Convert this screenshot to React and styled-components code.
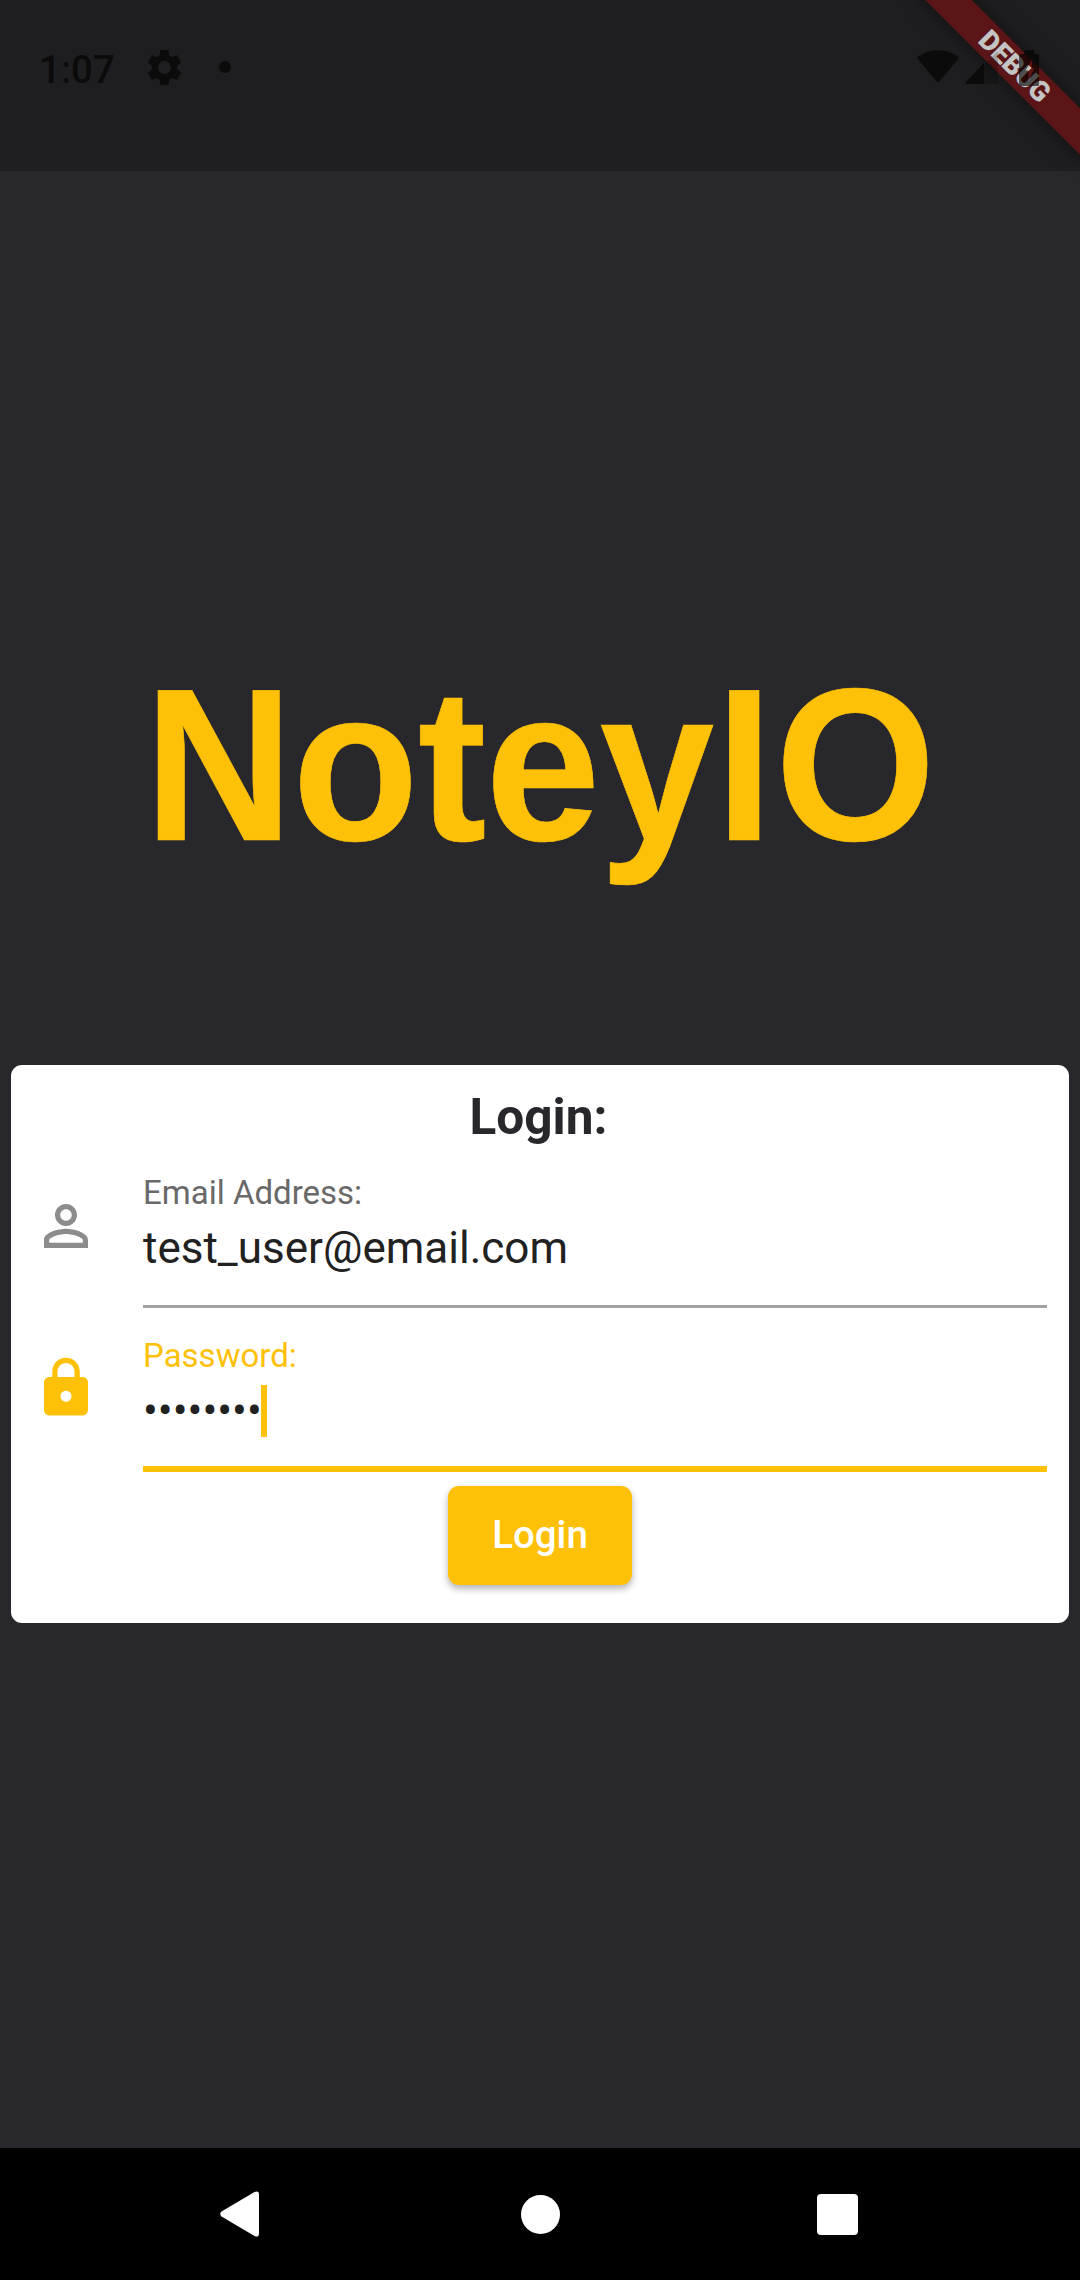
import React from "react";
import styled, { createGlobalStyle } from "styled-components";

const AMBER = "#ffc107";
const INK = "#28272c";

const GlobalStyle = createGlobalStyle`
  body {
    margin: 0;
    background: ${INK};
  }
  *, *::before, *::after {
    box-sizing: border-box;
  }
`;

const Screen = styled.div`
  position: relative;
  display: flex;
  flex-direction: column;
  width: 1080px;
  height: 2280px;
  overflow: hidden;
  background: ${INK};
  font-family: Roboto, "Liberation Sans", sans-serif;
`;

const AppBar = styled.header`
  flex: none;
  height: 171px;
  background: #1e1e20;
`;

const StatusRow = styled.div`
  position: relative;
  z-index: 2;
  display: flex;
  align-items: center;
  height: 135px;
  padding: 0 41px 0 39px;
  color: #000;
  opacity: 0.6;
`;

const Clock = styled.span`
  width: 109px;
  padding-top: 4px;
  font-size: 38.5px;
  font-weight: 500;
  line-height: 46px;
`;

const StatusGlyph = styled.svg`
  flex: none;
  display: block;
  width: ${(p) => p.$w}px;
  height: ${(p) => p.$h}px;
  margin-left: ${(p) => p.$gap || 0}px;
  margin-bottom: ${(p) => p.$lift || 0}px;
  fill: currentColor;
`;

const Spacer = styled.span`
  flex: 1;
`;

const DebugBanner = styled.div`
  position: absolute;
  z-index: 1;
  top: 49.3px;
  left: 894px;
  width: 240px;
  height: 33px;
  padding-left: 2px;
  transform: rotate(45deg);
  background: #5c1516;
  box-shadow: 0 0 17px rgba(0, 0, 0, 0.5);
  color: #c4c4c4;
  font-size: 28px;
  font-weight: 900;
  letter-spacing: -0.3px;
  line-height: 33px;
  text-align: center;
`;

const Body = styled.main`
  flex: 1;
  display: flex;
  flex-direction: column;
  align-items: stretch;
`;

const Brand = styled.h1`
  height: 894px;
  margin: 0;
  padding-top: 475px;
  color: ${AMBER};
  font-family: "Liberation Sans", sans-serif;
  font-size: 206.25px;
  font-weight: 700;
  line-height: 238px;
  text-align: center;
`;

const BrandText = styled.span`
  display: inline-block;
  transform: scaleY(1.052);
  -webkit-text-stroke: 0.6px ${AMBER};
`;

const BrandPart = styled.span`
  letter-spacing: ${(p) => p.$track}px;
`;

const Card = styled.section`
  display: flex;
  flex-direction: column;
  align-items: stretch;
  height: 558px;
  margin: 0 11px;
  padding: 23px 22px 0;
  border-radius: 11px;
  background: #fff;
`;

const CardTitle = styled.h2`
  height: 57px;
  margin: 0;
  padding-right: 3px;
  color: ${INK};
  font-size: 49.5px;
  font-weight: 700;
  line-height: 58px;
  text-align: center;
`;

const FieldRow = styled.label`
  display: flex;
  gap: 44px;
  height: 163.3px;
`;

const FieldIcon = styled.svg`
  flex: none;
  width: 66px;
  height: 66px;
  margin-top: ${(p) => p.$top}px;
  fill: ${(p) => p.$color};
`;

const FieldBody = styled.span`
  flex: 1;
  display: flex;
  flex-direction: column;
  padding-top: 28px;
  border-bottom: ${(p) => (p.$active ? `6px solid ${AMBER}` : "3px solid #a3a3a3")};
`;

const FieldLabel = styled.span`
  margin-bottom: 9.5px;
  color: ${(p) => (p.$active ? AMBER : "#696969")};
  font-size: 33px;
  line-height: 39px;
`;

const FieldValue = styled.span`
  display: flex;
  align-items: center;
  height: 52px;
  color: #212121;
  font-size: 44px;
  line-height: 52px;
`;

const Caret = styled.span`
  width: 6px;
  height: 52px;
  margin-left: -0.3px;
  background: ${AMBER};
`;

const SubmitButton = styled.button`
  align-self: center;
  width: 184px;
  height: 99px;
  margin-top: 14px;
  padding: 0;
  border: 0;
  border-radius: 11px;
  background: ${AMBER};
  box-shadow: 0 4px 6px rgba(0, 0, 0, 0.2), 0 3px 10px rgba(0, 0, 0, 0.12);
  color: #fff;
  font-family: inherit;
  font-size: 38.5px;
  font-weight: 500;
  line-height: 46px;
`;

const NavBar = styled.nav`
  flex: none;
  display: flex;
  align-items: center;
  gap: 262px;
  height: 132px;
  padding: 0 0 0 220px;
  background: #000;
`;

const NavGlyph = styled.svg`
  display: block;
  width: ${(p) => p.$w}px;
  height: ${(p) => p.$h}px;
  margin-left: ${(p) => p.$nudge || 0}px;
  fill: #fff;
`;

const PERSON =
  "M12 5.9c1.16 0 2.1.94 2.1 2.1s-.94 2.1-2.1 2.1S9.9 9.16 9.9 8s.94-2.1 2.1-2.1m0 9c2.97 0 6.1 1.46 6.1 2.1v1.1H5.9V17c0-.64 3.13-2.1 6.1-2.1M12 4C9.79 4 8 5.79 8 8s1.79 4 4 4 4-1.79 4-4-1.79-4-4-4zm0 9c-2.67 0-8 1.34-8 4v3h16v-3c0-2.66-5.33-4-8-4z";
const LOCK =
  "M18 8h-1V6c0-2.76-2.24-5-5-5S7 3.24 7 6v2H6c-1.1 0-2 .9-2 2v10c0 1.1.9 2 2 2h12c1.1 0 2-.9 2-2V10c0-1.1-.9-2-2-2zm-6 9c-1.1 0-2-.9-2-2s.9-2 2-2 2 .9 2 2-.9 2-2 2zm3.1-9H8.900V6c0-1.710 1.390-3.100 3.100-3.100 1.710 0 3.100 1.390 3.100 3.100v2z";
const GEAR =
  "M19.140 12.940c.040-.300.060-.610.060-.940 0-.320-.020-.640-.070-.940l2.030-1.580c.180-.140.230-.410.120-.610l-1.920-3.320c-.120-.220-.370-.290-.590-.220l-2.390.960c-.500-.380-1.030-.700-1.620-.940l-.360-2.540c-.040-.240-.240-.410-.480-.410h-3.840c-.240 0-.430.170-.470.410l-.360 2.540c-.590.240-1.130.570-1.620.940l-2.390-.960c-.220-.080-.470 0-.590.220L2.740 8.870c-.120.210-.080.470.120.610l2.030 1.580c-.050.300-.090.630-.090.940s.020.640.070.940l-2.030 1.580c-.180.140-.230.410-.120.610l1.920 3.320c.120.220.370.290.590.220l2.390-.960c.500.380 1.030.700 1.620.940l.360 2.540c.050.240.240.410.480.410h3.840c.240 0 .440-.170.470-.410l.360-2.540c.590-.240 1.130-.560 1.620-.940l2.390.960c.220.080.470 0 .590-.220l1.920-3.320c.120-.220.070-.470-.120-.610l-2.010-1.580zM12 15.600c-1.980 0-3.600-1.620-3.600-3.600s1.620-3.600 3.600-3.600 3.600 1.620 3.600 3.600-1.620 3.600-3.600 3.600z";

function StatusBar() {
  return (
    <StatusRow>
      <Clock>1:07</Clock>
      <StatusGlyph $w={33} $h={35} viewBox="2.670 2.400 18.660 19.200" preserveAspectRatio="none">
        <path d={GEAR} />
      </StatusGlyph>
      <StatusGlyph $w={12} $h={12} $gap={38} $lift={1} viewBox="0 0 12 12">
        <circle cx="6" cy="6" r="6" />
      </StatusGlyph>
      <Spacer />
      <StatusGlyph $w={42} $h={33} $lift={2} viewBox="0 0 42 33">
        <path d="M1.200 9.500Q-.600 7.500 1.600 5.900Q10 .300 21 .300T40.400 5.900Q42.600 7.500 40.800 9.500L22.800 31Q21 33 19.200 31Z" />
      </StatusGlyph>
      <StatusGlyph $w={33} $h={33} $gap={6} viewBox="0 0 33 33">
        <path opacity="0.300" d="M19 14V33H33V2Q33 0 31.500 1.500Z" />
        <path d="M19 12V33H1.500Q-.500 33 .800 31.200Z" />
      </StatusGlyph>
      <StatusGlyph $w={20} $h={36} $gap={21} viewBox="0 0 20 36">
        <path
          fillRule="evenodd"
          d="M5 0H15V4H18.500Q20 4 20 5.500V34.500Q20 36 18.500 36H1.500Q0 36 0 34.500V5.500Q0 4 1.500 4H5ZM13 9.500L6.500 20.500H9.500V31L15.500 18H13Z"
        />
      </StatusGlyph>
    </StatusRow>
  );
}

function Field({ icon, iconTop, label, active, children }) {
  return (
    <FieldRow>
      <FieldIcon viewBox="0 0 24 24" $top={iconTop} $color={active ? AMBER : "#8c8c8c"}>
        <path d={icon} />
      </FieldIcon>
      <FieldBody $active={active}>
        <FieldLabel $active={active}>{label}</FieldLabel>
        <FieldValue>{children}</FieldValue>
      </FieldBody>
    </FieldRow>
  );
}

export default function App() {
  return (
    <>
      <GlobalStyle />
      <Screen>
        <AppBar>
          <StatusBar />
        </AppBar>
        <DebugBanner>DEBUG</DebugBanner>
        <Body>
          <Brand>
            <BrandText>
              <BrandPart $track={-0.8}>Note</BrandPart>
              <BrandPart $track={1.2}>y</BrandPart>
              <BrandPart $track={2.5}>I</BrandPart>O
            </BrandText>
          </Brand>
          <Card>
            <CardTitle>Login:</CardTitle>
            <Field icon={PERSON} iconTop={48} label="Email Address:">
              test_user@email.com
            </Field>
            <Field icon={LOCK} iconTop={47} label="Password:" active>
              ••••••••
              <Caret />
            </Field>
            <SubmitButton type="button">Login</SubmitButton>
          </Card>
        </Body>
        <NavBar>
          <NavGlyph $w={39} $h={46} viewBox="0 0 39 46">
            <path d="M1.500 20.500L34.500 1Q39 -1 39 3.500V42.500Q39 47 34.500 45L1.500 25.500Q-1 23 1.500 20.500Z" />
          </NavGlyph>
          <NavGlyph $w={39} $h={39} viewBox="0 0 39 39">
            <circle cx="19.500" cy="19.500" r="19.500" />
          </NavGlyph>
          <NavGlyph $w={41} $h={41} $nudge={-5} viewBox="0 0 41 41">
            <rect width="41" height="41" rx="4" />
          </NavGlyph>
        </NavBar>
      </Screen>
    </>
  );
}
